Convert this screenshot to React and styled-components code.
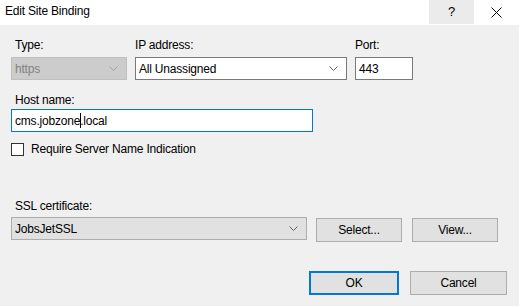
import styled, { createGlobalStyle } from "styled-components";

const Global = createGlobalStyle`
  html, body {
    margin: 0;
    padding: 0;
    background: #f0f0f0;
  }
  body {
    font-family: "Segoe UI", "Liberation Sans", sans-serif;
    font-size: 12px;
    line-height: 16px;
    letter-spacing: -0.2px;
    color: #000;
  }
`;

const Window = styled.div`
  width: 519px;
  height: 306px;
  display: flex;
  flex-direction: column;
  background: #f0f0f0;
  overflow: hidden;
`;

const TitleBar = styled.div`
  height: 25px;
  background: #fff;
  display: flex;
  align-items: stretch;
`;

const Title = styled.div`
  flex: 1;
  padding-left: 5px;
  line-height: 22px;
`;

const TitleButton = styled.div`
  width: ${(p) => p.$w}px;
  height: 24px;
  background: ${(p) => (p.$hover ? "#ebebeb" : "transparent")};
  display: flex;
  align-items: center;
  justify-content: center;
  font-size: 13px;
`;

const Body = styled.div`
  flex: 1;
  padding: 12px 0 0 11px;
  display: flex;
  flex-direction: column;
`;

const TopRow = styled.div`
  display: grid;
  grid-template-columns: 116px 212px 58px;
  column-gap: 8px;
  align-items: end;
`;

const Field = styled.div`
  display: flex;
  flex-direction: column;
  margin-top: ${(p) => p.$top || 0}px;
`;

const Label = styled.div`
  height: 16px;
  padding-left: ${(p) => p.$indent || 0}px;
  margin-bottom: ${(p) => p.$gap || 4}px;
`;

const Combo = styled.div`
  box-sizing: border-box;
  height: 23px;
  width: ${(p) => (p.$w ? `${p.$w}px` : "100%")};
  border: 1px solid ${(p) => p.$border};
  background: ${(p) => p.$bg};
  color: ${(p) => p.$color || "#000"};
  display: flex;
  align-items: center;
  justify-content: space-between;
  padding: 0 8px 0 3px;
`;

const TextBox = styled.div`
  box-sizing: border-box;
  height: 23px;
  width: ${(p) => p.$w}px;
  border: 1px solid ${(p) => (p.$focus ? "#0078d7" : "#7a7a7a")};
  background: #fff;
  display: flex;
  align-items: center;
  padding-left: 3px;
`;

const Caret = styled.span`
  display: inline-block;
  width: 1px;
  height: 15px;
  background: #000;
  margin: 0 -1px 0 0;
`;

const CheckRow = styled.div`
  display: flex;
  align-items: center;
  gap: 7px;
  margin-top: 9px;
`;

const Check = styled.div`
  box-sizing: border-box;
  width: 13px;
  height: 13px;
  border: 1px solid #333;
  background: #fff;
`;

const CertRow = styled.div`
  display: flex;
  align-items: flex-end;
  margin-top: 41px;
`;

const Buttons = styled.div`
  display: flex;
  gap: ${(p) => p.$gap}px;
  margin-left: ${(p) => p.$left}px;
  margin-bottom: ${(p) => p.$drop || 0}px;
`;

const Button = styled.div`
  box-sizing: border-box;
  width: ${(p) => p.$w}px;
  height: 24px;
  background: #e1e1e1;
  border: ${(p) => (p.$default ? "2px solid #0078d7" : "1px solid #adadad")};
  display: flex;
  align-items: center;
  justify-content: center;
`;

const Footer = styled.div`
  display: flex;
  justify-content: flex-end;
  padding-right: 12px;
  margin-top: 31px;
`;

function Chevron({ color = "#606060" }) {
  return (
    <svg width="9" height="5" viewBox="0 0 9 5">
      <path d="M0.5 0.5 L4.5 4.5 L8.5 0.5" fill="none" stroke={color} strokeWidth="1" />
    </svg>
  );
}

function CloseIcon() {
  return (
    <svg width="11" height="11" viewBox="0 0 11 11">
      <path d="M0.5 0.5 L10.5 10.5 M10.5 0.5 L0.5 10.5" stroke="#000" strokeWidth="1" />
    </svg>
  );
}

export default function App() {
  return (
    <>
      <Global />
      <Window>
        <TitleBar>
          <Title>Edit Site Binding</Title>
          <TitleButton $w={45} $hover>?</TitleButton>
          <TitleButton $w={45}>
            <CloseIcon />
          </TitleButton>
        </TitleBar>
        <Body>
          <TopRow>
            <Field>
              <Label $indent={4}>Type:</Label>
              <Combo $bg="#cccccc" $border="#bfbfbf" $color="#838383">
                https
                <Chevron color="#a0a0a0" />
              </Combo>
            </Field>
            <Field>
              <Label>IP address:</Label>
              <Combo $bg="#fff" $border="#7a7a7a">
                All Unassigned
                <Chevron />
              </Combo>
            </Field>
            <Field>
              <Label>Port:</Label>
              <TextBox $w={58}>443</TextBox>
            </Field>
          </TopRow>

          <Field $top={12}>
            <Label $indent={4} $gap={1}>Host name:</Label>
            <TextBox $w={302} $focus>
              cms.jobzone<Caret />.local
            </TextBox>
          </Field>

          <CheckRow>
            <Check />
            Require Server Name Indication
          </CheckRow>

          <CertRow>
            <Field>
              <Label $indent={4} $gap={3}>SSL certificate:</Label>
              <Combo $w={296} $bg="#e1e1e1" $border="#adadad">
                JobsJetSSL
                <Chevron />
              </Combo>
            </Field>
            <Buttons $gap={10} $left={9} $drop={-2}>
              <Button $w={86}>Select...</Button>
              <Button $w={86}>View...</Button>
            </Buttons>
          </CertRow>

          <Footer>
            <Buttons $gap={11} $left={0}>
              <Button $w={90} $default>OK</Button>
              <Button $w={97}>Cancel</Button>
            </Buttons>
          </Footer>
        </Body>
      </Window>
    </>
  );
}
